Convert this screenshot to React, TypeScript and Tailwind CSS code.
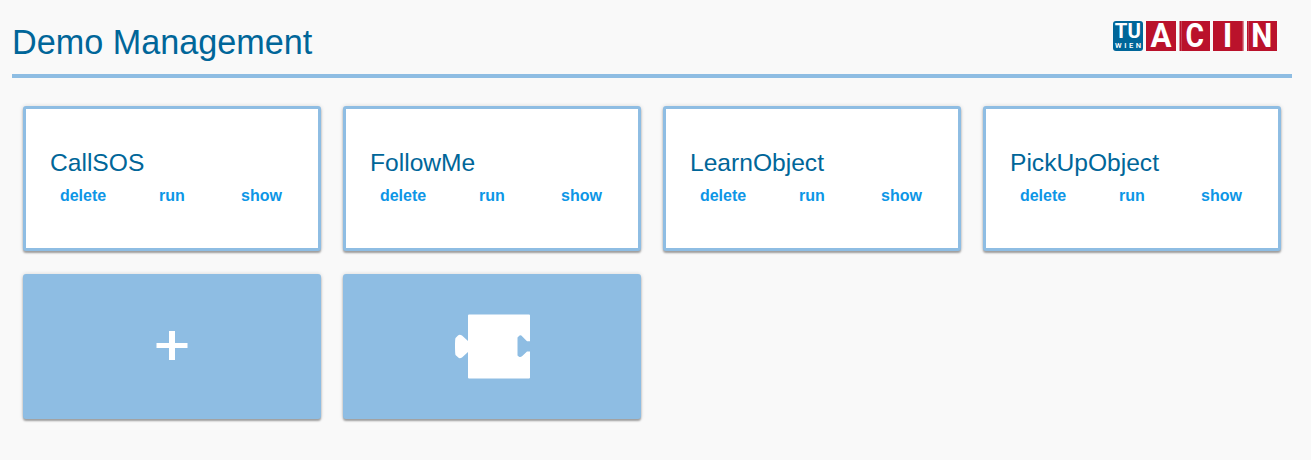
const demos = ['CallSOS', 'FollowMe', 'LearnObject', 'PickUpObject'];
const actions = [
  { label: 'delete', width: 'w-[66px]' },
  { label: 'run', width: 'w-28' },
  { label: 'show', width: 'w-[67px]' },
];

const shadow = 'shadow-[0_2px_2px_0_rgba(0,0,0,0.33),0_0_4px_0_rgba(0,0,0,0.14)]';

function Logo() {
  return (
    <svg className="overflow-visible" width="164" height="30" viewBox="0 0 164 30" fontFamily="Roboto, sans-serif" fontWeight="700" fill="#fff" textAnchor="middle">
      <rect width="30" height="30" rx="3" fill="#006699" />
      <text x="14.800" y="17" fontSize="19.500" textLength="26" lengthAdjust="spacingAndGlyphs">TU</text>
      <text x="15" y="27" fontSize="7.500" fontWeight="600" textLength="26" lengthAdjust="spacing">WIEN</text>
      <rect x="33" width="30" height="30" fill="#ba122b" />
      <rect x="66.500" width="30.500" height="30" fill="#ba122b" />
      <rect x="100" width="30.500" height="30" fill="#ba122b" />
      <rect x="134" width="30" height="30" fill="#ba122b" />
      <path d="M68.500 0v30M129.500 0v30M135.500 0v30" stroke="#fff" strokeOpacity="0.2" strokeWidth="1" />
      <text x="48" y="26.300" fontSize="33" textLength="21" lengthAdjust="spacingAndGlyphs">A</text>
      <text x="81.700" y="26.300" fontSize="33" textLength="18.500" lengthAdjust="spacingAndGlyphs">C</text>
      <text x="114.500" y="26.300" fontSize="33">I</text>
      <text x="148.700" y="26.300" fontSize="33" textLength="21" lengthAdjust="spacingAndGlyphs">N</text>
    </svg>
  );
}

function DemoCard({ name }: { name: string }) {
  return (
    <article className={`h-[145px] rounded-[3px] border-[3px] border-[#8ebde3] bg-white px-6 pt-[38px] ${shadow}`}>
      <h2 className="text-[24.6px] leading-8 text-[#006699]">{name}</h2>
      <div className="flex pt-[5px] text-base leading-6 font-bold text-[#0d96e6]">
        {actions.map((a) => (
          <button key={a.label} className={`${a.width} shrink-0 text-center`}>{a.label}</button>
        ))}
      </div>
    </article>
  );
}

export default function App() {
  return (
    <div className="h-[460px] overflow-hidden bg-[#f9f9f9] pl-3 font-['Liberation_Sans',Arial,sans-serif]">
      <header className="flex h-[78px] w-[1280px] items-start justify-between border-b-4 border-[#8ebde3] pr-[15px] pt-[21px]">
        <h1 className="text-[34.2px] leading-[42px] text-[#006699]">Demo Management</h1>
        <Logo />
      </header>
      <main className="grid grid-cols-[repeat(4,298px)] gap-x-[22px] gap-y-[23px] pl-[11px] pt-7">
        {demos.map((name) => (
          <DemoCard key={name} name={name} />
        ))}
        <button aria-label="Add demo" className={`flex h-[145px] items-center justify-center rounded-[3px] bg-[#8ebde3] pb-px ${shadow}`}>
          <svg width="32" height="30" viewBox="0 0 32 30">
            <path d="M13 0h6v12h12.500v5H19v12h-6V17H.5v-5H13z" fill="#fff" />
          </svg>
        </button>
        <button aria-label="Add block" className={`flex h-[145px] items-center justify-center rounded-[3px] bg-[#8ebde3] pb-px ${shadow}`}>
          <svg width="75" height="65" viewBox="0 0 75 65" className="mt-px">
            <path d="M14 .5h60q1 0 1 1V27.300h-3L67.300 22.500Q65.500 20.500 64 22L62.500 23.500V41.500L64 42.700Q65.500 43.500 67.300 42L72 37.500h3v26q0 1-1 1H14q-1 0-1-1V38L7 43.500Q4.500 45 3 43.300L.5 41Q0 39 0 32T.5 24L3 21.500Q4.500 19.800 7 21.500L13 27V1.500q0-1 1-1z" fill="#fff" />
          </svg>
        </button>
      </main>
    </div>
  );
}
